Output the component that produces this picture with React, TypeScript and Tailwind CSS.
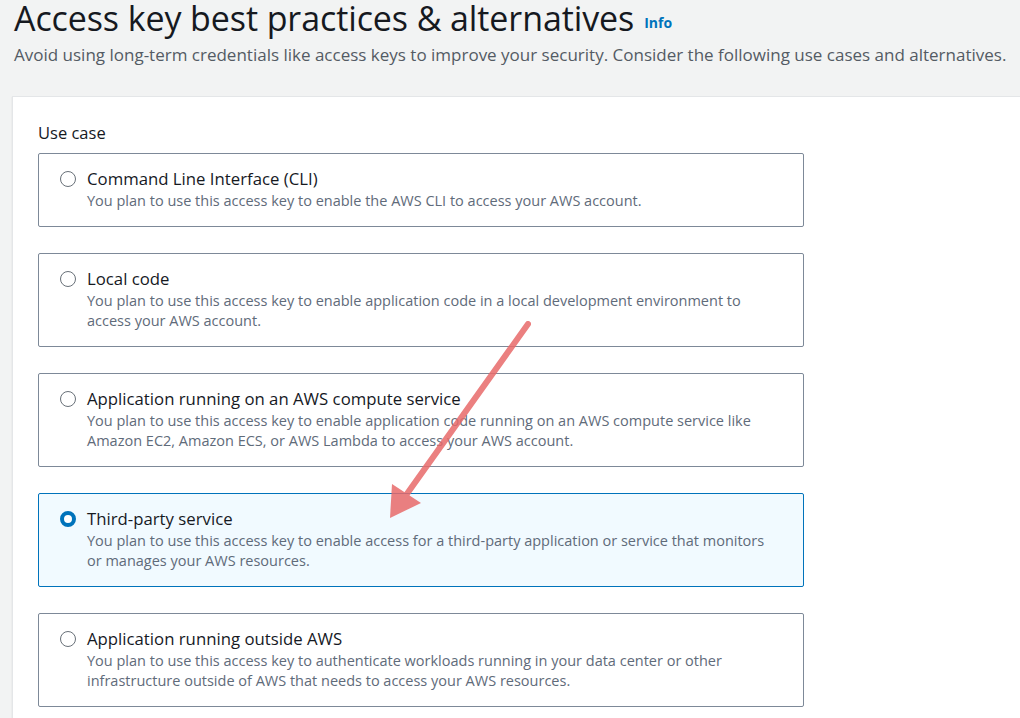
import React from "react";

const OPTIONS = [
  {
    title: "Command Line Interface (CLI)",
    desc: ["You plan to use this access key to enable the AWS CLI to access your AWS account."],
  },
  {
    title: "Local code",
    desc: [
      "You plan to use this access key to enable application code in a local development environment to",
      "access your AWS account.",
    ],
  },
  {
    title: "Application running on an AWS compute service",
    desc: [
      "You plan to use this access key to enable application code running on an AWS compute service like",
      "Amazon EC2, Amazon ECS, or AWS Lambda to access your AWS account.",
    ],
  },
  {
    title: "Third-party service",
    desc: [
      "You plan to use this access key to enable access for a third-party application or service that monitors",
      "or manages your AWS resources.",
    ],
    selected: true,
  },
  {
    title: "Application running outside AWS",
    desc: [
      "You plan to use this access key to authenticate workloads running in your data center or other",
      "infrastructure outside of AWS that needs to access your AWS resources.",
    ],
  },
];

function Radio({ on }: { on?: boolean }) {
  return on ? (
    <span className="mt-[4px] block h-[16px] w-[16px] shrink-0 rounded-full border-[4px] border-[#0073bb] bg-white" />
  ) : (
    <span className="mt-[4px] block h-[16px] w-[16px] shrink-0 rounded-full border-[1.5px] border-[#687078] bg-white" />
  );
}

export default function App() {
  return (
    <div
      className="relative h-[718px] w-[1020px] overflow-hidden bg-[#f2f3f3] text-[#16191f]"
      style={{ fontFamily: '"Open Sans", "Noto Sans", sans-serif' }}
    >
      <div className="px-[14px]">
        <h1 className="whitespace-nowrap text-[34px] font-normal leading-[36px] tracking-[-0.1px]">
          Access key best practices &amp; alternatives
          <span className="ml-[10px] align-[3px] text-[14px] font-bold leading-none tracking-normal text-[#0073bb]">Info</span>
        </h1>
        <p className="mt-[7px] whitespace-nowrap text-[17px] leading-[24px] text-[#545b64]">
          Avoid using long-term credentials like access keys to improve your security. Consider the following use cases and alternatives.
        </p>
      </div>

      <div className="ml-[12px] mt-[29px] h-[700px] border-l border-t border-[#e4e6e8] bg-white shadow-[0_1px_1px_rgba(0,28,36,0.15)]">
        <div className="pl-[25px] pt-[25px]">
          <div className="text-[16.5px] leading-[22px]">Use case</div>
          <div className="mt-[9px] flex w-[766px] flex-col gap-[26px]">
            {OPTIONS.map((o) => (
              <div
                key={o.title}
                className={
                  o.selected
                    ? "flex gap-[11px] rounded-[2px] border border-[#0073bb] bg-[#f1faff] pb-[15px] pl-[21px] pr-[12px] pt-[13px]"
                    : "flex gap-[11px] rounded-[2px] border border-[#7d8998] bg-white pb-[15px] pl-[21px] pr-[12px] pt-[13px]"
                }
              >
                <Radio on={o.selected} />
                <div>
                  <div className="text-[16.75px] leading-[24px]">{o.title}</div>
                  <div className="text-[14.5px] leading-[20px] text-[#5f6b7a]">
                    {o.desc.map((l) => (
                      <div key={l} className="whitespace-nowrap">{l}</div>
                    ))}
                  </div>
                </div>
              </div>
            ))}
          </div>
        </div>
      </div>

      <svg className="pointer-events-none absolute left-0 top-0" width="1020" height="718">
        <g opacity="0.85">
          <line x1="528" y1="324" x2="404" y2="498" stroke="#e86a6a" strokeWidth="6" strokeLinecap="round" />
          <polygon points="390,518 392,484 421,503" fill="#e86a6a" />
        </g>
      </svg>
    </div>
  );
}
